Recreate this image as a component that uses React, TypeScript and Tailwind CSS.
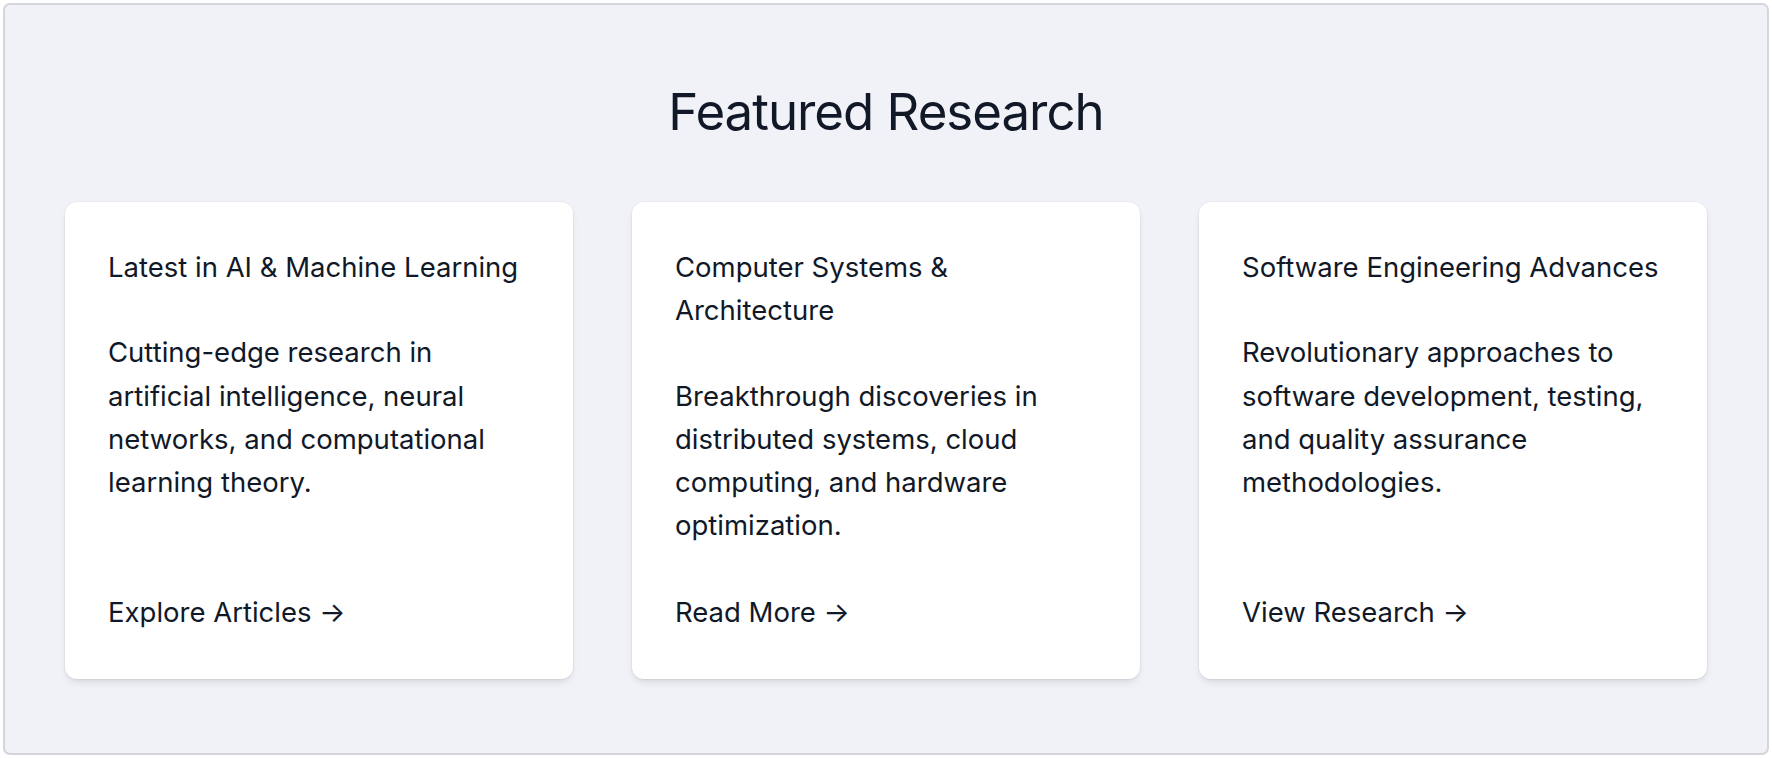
const cards = [
  {
    title: "Latest in AI & Machine Learning",
    body: "Cutting-edge research in artificial intelligence, neural networks, and computational learning theory.",
    link: "Explore Articles",
  },
  {
    title: "Computer Systems & Architecture",
    body: "Breakthrough discoveries in distributed systems, cloud computing, and hardware optimization.",
    link: "Read More",
  },
  {
    title: "Software Engineering Advances",
    body: "Revolutionary approaches to software development, testing, and quality assurance methodologies.",
    link: "View Research",
  },
];

function ResearchCard({ title, body, link }: { title: string; body: string; link: string }) {
  return (
    <div className="flex flex-col rounded-[12px] bg-white pl-[43px] pr-[40px] pt-[44px] pb-[45px] text-[27.5px] leading-[43.3px] shadow-[0_5px_9px_-2px_rgba(15,23,42,0.1),0_2px_5px_-2px_rgba(15,23,42,0.08),0_0_0_1px_rgba(15,23,42,0.03)]">
      <h3 className="mb-[42px] font-normal">{title}</h3>
      <p>{body}</p>
      <a href="#" className="mt-auto pt-[43px]">
        {link} →
      </a>
    </div>
  );
}

export default function App() {
  return (
    <div className="h-screen bg-white p-[3px] font-['Inter','Noto_Sans',sans-serif] text-[#111827]">
      <section className="h-full rounded-[7px] border-2 border-[#d4d6dc] bg-[#f1f2f7] px-[60px] pt-[77px]">
        <h2 className="text-center text-[51px] leading-[60px] tracking-[-0.02em] font-normal">Featured Research</h2>
        <div className="mt-[60px] grid grid-cols-3 gap-[59px]">
          {cards.map((card, index) => (
            <ResearchCard key={index} {...card} />
          ))}
        </div>
      </section>
    </div>
  );
}
